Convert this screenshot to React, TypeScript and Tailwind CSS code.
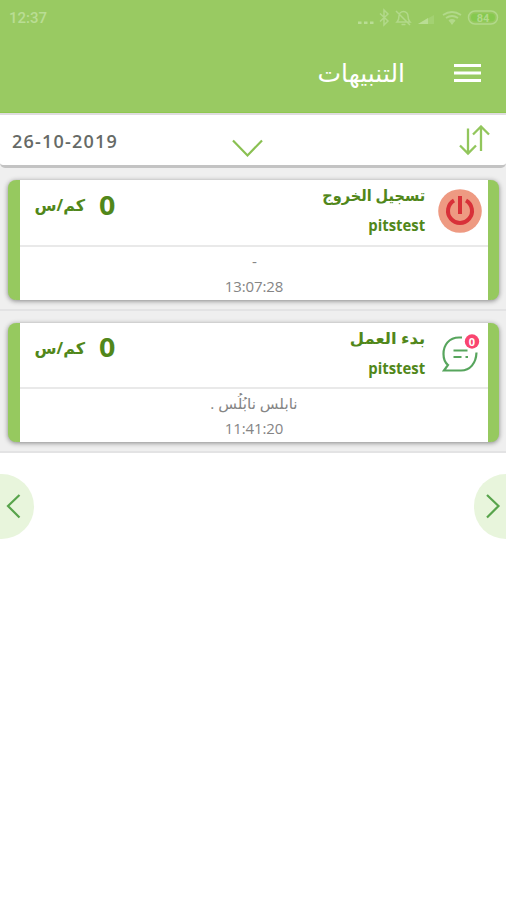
interface Alert {
  title: string;
  user: string;
  speed: number;
  place: string;
  time: string;
  kind: "logout" | "message";
}

const alerts: Alert[] = [
  {
    title: "تسجيل الخروج",
    user: "pitstest",
    speed: 0,
    place: "-",
    time: "13:07:28",
    kind: "logout",
  },
  {
    title: "بدء العمل",
    user: "pitstest",
    speed: 0,
    place: "نابلس نابُلُس .",
    time: "11:41:20",
    kind: "message",
  },
];

export default function App() {
  return (
    <div className="h-[900px] w-[506px] overflow-hidden bg-white font-['Open_Sans','DejaVu_Sans',sans-serif]">
      <Header />
      <FilterBar />
      {alerts.map((a) => (
        <AlertRow key={a.time} alert={a} />
      ))}
      <Pager />
    </div>
  );
}

function Header() {
  return (
    <header className="h-[113px] border-b border-[#8fc850] bg-[#99ca62] text-white">
      <div className="flex h-9 items-center justify-between pr-[7px] pl-[9px]">
        <span className="font-['Roboto',sans-serif] text-[15px] font-medium text-[#b9dd94]">
          12:37
        </span>
        <StatusIcons />
      </div>
      <div className="flex h-[74px] items-center justify-end gap-[49px] pr-[25px]">
        <h1 className="font-['DejaVu_Sans',sans-serif] text-[25px] leading-none" dir="rtl">
          التنبيهات
        </h1>
        <svg width="27" height="18" fill="#fff">
          <rect width="27" height="3" />
          <rect y="7.5" width="27" height="3" />
          <rect y="15" width="27" height="3" />
        </svg>
      </div>
    </header>
  );
}

function StatusIcons() {
  return (
    <svg width="142" height="20" viewBox="0 0 142 20" fill="none" stroke="#b2d98a" strokeWidth="1.2">
      <g fill="#b9dd94" stroke="none">
        <rect x="1" y="13.5" width="3.5" height="2.5" />
        <rect x="7" y="13.5" width="3.5" height="2.5" />
        <rect x="13" y="13.5" width="3.5" height="2.5" />
      </g>
      {/* bluetooth */}
      <path d="M23 5.5 31 13l-4 4V2l4 4-8 7.5" strokeWidth="1.5" />
      {/* muted bell */}
      <path d="M40 14h13c-2-2-2-3-2-6a4.500 4.500 0 0 0-9 0c0 3 0 4-2 6ZM44.500 16.500h4M39 3l14 14" strokeWidth="1.5" />
      <path d="M61 16 77 7v9Z" fill="#a3d172" stroke="none" />
      <path d="M61 16 71 10v6Z" fill="#b9dd94" stroke="none" />
      {/* wifi */}
      <path d="M86 7q9-6 18 0M89 10q6-4 12 0M92 13q3-2 6 0" strokeWidth="1.8" />
      <path d="m93 13 2 3 2-3Z" fill="#b2d98a" />
      <rect x="111.500" y="3" width="29" height="13" rx="6.500" strokeWidth="1.5" />
      <rect x="114" y="5.500" width="24" height="8" rx="4" fill="#86c94f" stroke="none" />
      <text x="126" y="13.500" textAnchor="middle" fill="#b2d98a" stroke="none" fontSize="11" fontWeight="700" fontFamily="Roboto">
        84
      </text>
    </svg>
  );
}

function FilterBar() {
  return (
    <div className="bg-[#efefef]">
      <div className="flex h-[55px] items-start rounded-b-[5px] border-t-2 border-b-[3px] border-t-[#dfdcdf] border-b-[#c3c3c3] bg-white pr-4 pl-3">
        <span className="w-[220px] pt-3 text-[18px] leading-7 font-semibold tracking-[1.2px] text-[#666a66]">
          26-10-2019
        </span>
        <svg className="mt-6" width="32" height="20" fill="none" stroke="#8ac052" strokeWidth="2.2">
          <path d="m1 1.5 14.5 15L30 1.5" />
        </svg>
        <svg className="mt-2.5 ml-auto" width="32" height="32" fill="none" stroke="#92c65c" strokeWidth="2.3">
          <path d="M10 3.5v25M2 20.5l8 8 8-8M23 26V1.5M15 9.5l8-8 8 8" />
        </svg>
      </div>
    </div>
  );
}

function AlertRow({ alert }: { alert: Alert }) {
  return (
    <div className="h-[142.5px] border-b-2 border-[#e3e3e4] bg-[#efefef] pt-3 pr-[7px] pl-[8px]">
      <div className="flex h-[119.5px] overflow-hidden rounded-[8px] border-r-[11px] border-l-[12px] border-[#96c95f] bg-white shadow-[0_1px_5px_rgba(0,0,0,0.45)]">
        <div className="flex w-full flex-col">
          <div className="flex h-[66.5px] border-b-2 border-[#e9e9e9] pr-1.5 pl-3.5 text-[#51871a]">
            <div className="flex h-[50px] items-center gap-3.5 font-bold">
              <span className="w-[51px] text-[16px] whitespace-nowrap" dir="rtl">
                كم/س
              </span>
              <span className="origin-left scale-x-110 text-[26px]">{alert.speed}</span>
            </div>
            <div className="ml-auto flex gap-[13px]">
              <div className="flex flex-col items-end font-bold">
                <span
                  className={`h-[31px] origin-right text-[16px] leading-[31px] whitespace-nowrap ${
                    alert.kind === "logout" ? "scale-x-[0.91]" : "scale-x-[1.03]"
                  }`}
                  dir="rtl"
                >
                  {alert.title}
                </span>
                <span className="origin-right scale-x-[0.93] text-[16px] leading-[29px]">
                  {alert.user}
                </span>
              </div>
              {alert.kind === "logout" ? <PowerIcon /> : <MessageIcon />}
            </div>
          </div>
          <div className="flex flex-1 flex-col items-center text-[15px] text-[#858585]">
            <span className="h-[30px] scale-x-[1.02] leading-[29px] whitespace-nowrap" dir="rtl">
              {alert.place}
            </span>
            <span className="-mt-px leading-[21px] tracking-[-0.1px]">{alert.time}</span>
          </div>
        </div>
      </div>
    </div>
  );
}

function PowerIcon() {
  return (
    <svg className="mt-[9px]" width="44" height="44" viewBox="0 0 44 44" fill="none" stroke="#d83038" strokeWidth="4">
      <circle cx="22" cy="22" r="21.8" fill="#ee9a82" stroke="none" />
      <path d="M16 11.5a12 12 0 1 0 12 0M22 7v18" />
    </svg>
  );
}

function MessageIcon() {
  return (
    <svg className="mt-[9px]" width="44" height="44" viewBox="0 0 44 44" fill="none" stroke="#57a55d" strokeWidth="2.2">
      <path d="M24 5.500h-3C11 5.500 5.500 13 5.500 22c0 5 2 9 4.500 11l-4 5.500h17c9 0 15-7 15.500-18M15.500 18.500h14M15.500 25h8M27.500 25h2.500" />
      <circle cx="34" cy="9.500" r="7.200" fill="#fa4570" stroke="none" />
      <text x="34" y="13.500" textAnchor="middle" fill="#fff" stroke="none" fontSize="11" fontWeight="700">
        0
      </text>
    </svg>
  );
}

function Pager() {
  return (
    <div className="mt-[21px] flex h-[65px] justify-between text-[#58a44c]">
      <button className="w-[34px] rounded-r-full bg-[#e8f5dc]">
        <svg width="34" height="65" fill="none" stroke="currentColor" strokeWidth="2.2">
          <path d="M19.500 21 8 32l11.500 11.500" />
        </svg>
      </button>
      <button className="w-[32px] rounded-l-full bg-[#e8f5dc]">
        <svg width="32" height="65" fill="none" stroke="currentColor" strokeWidth="2.2">
          <path d="M13 21 24.500 32 13 43.500" />
        </svg>
      </button>
    </div>
  );
}
